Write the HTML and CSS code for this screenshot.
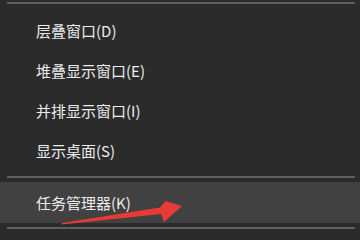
FILE: index.html
```html
<!DOCTYPE html>
<html lang="zh-CN">
<head>
<meta charset="utf-8">
<link rel="stylesheet" href="styles.css">
</head>
<body>
<div class="menu">
  <div class="sep sep-top"></div>
  <div class="group">
    <div class="item">层叠窗口(D)</div>
    <div class="item">堆叠显示窗口(E)</div>
    <div class="item">并排显示窗口(I)</div>
    <div class="item">显示桌面(S)</div>
  </div>
  <div class="sep sep-mid"></div>
  <div class="item item-hover">任务管理器(K)</div>
  <div class="sep sep-bottom"></div>
  <svg class="arrow" width="360" height="240" viewBox="0 0 360 240">
    <polygon points="62,223 160,207.5 165.5,201 182,206 164,222 161,214 62,224.6" fill="#e83a36"/>
  </svg>
</div>
</body>
</html>
```

FILE: styles.css
```css
html, body {
  margin: 0;
  padding: 0;
  background: #2b2b2b;
}
body {
  width: 360px;
  height: 240px;
  overflow: hidden;
}
.menu {
  position: relative;
  display: flex;
  flex-direction: column;
  width: 360px;
  height: 240px;
  padding-top: 2px;
  box-sizing: border-box;
  font-family: "Noto Sans CJK SC", "Noto Sans", sans-serif;
  font-size: 15px;
  color: #ececec;
}
.sep {
  height: 2px;
  margin: 0 5px 0 7px;
  background: #5f5f5f;
  flex: none;
}
.group {
  display: flex;
  flex-direction: column;
  margin-top: 6px;
}
.item {
  height: 40px;
  display: flex;
  align-items: center;
  padding-left: 36px;
  flex: none;
  white-space: nowrap;
}
.sep-mid {
  margin-top: 6px;
}
.item-hover {
  margin-top: 4px;
  height: 41px;
  background: #414141;
}
.sep-bottom {
  margin-top: 4px;
}
.arrow {
  position: absolute;
  left: 0;
  top: 0;
  pointer-events: none;
}
```
